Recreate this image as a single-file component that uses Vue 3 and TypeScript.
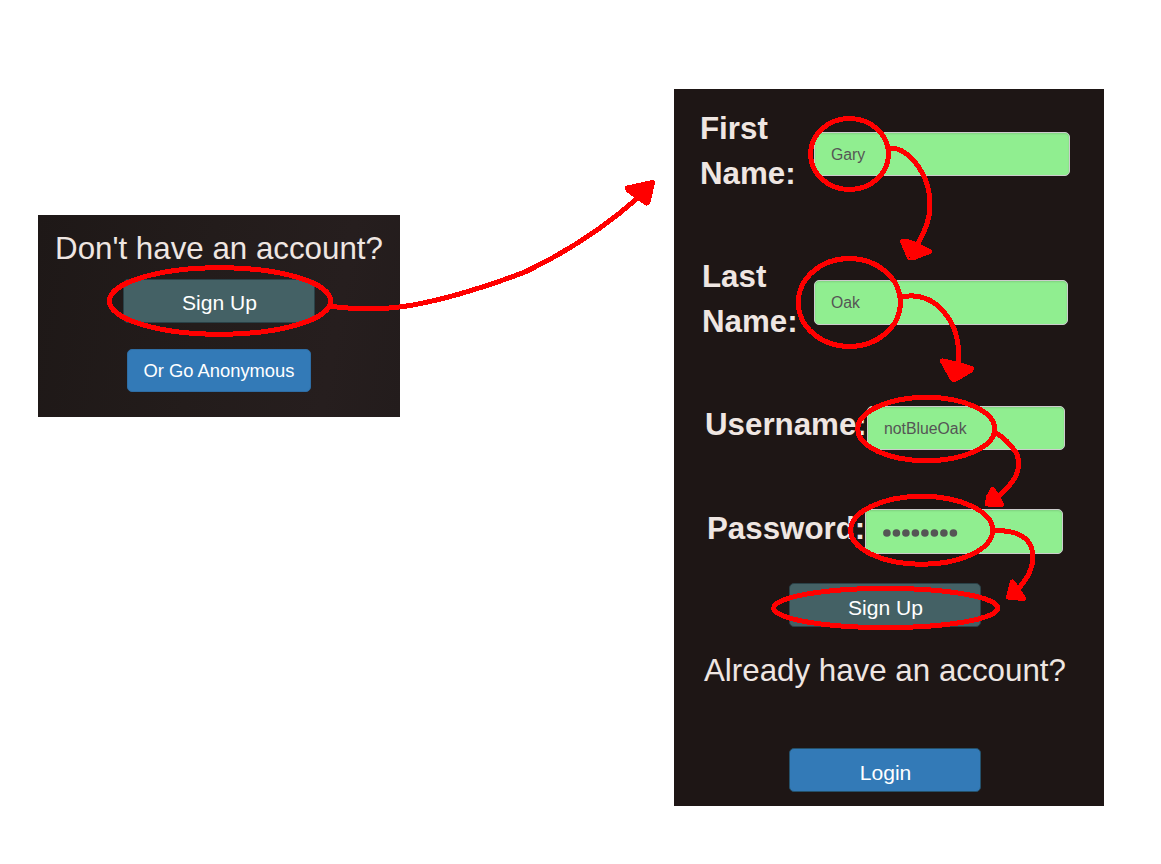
<script setup lang="ts">
interface Field {
  id: string
  lines: string[]
  value: string
  secret?: boolean
}

interface Ring {
  cx: number
  cy: number
  rx: number
  ry: number
}

interface Arrow {
  line: string
  head: string
}

const fields: Field[] = [
  { id: 'first', lines: ['First', 'Name:'], value: 'Gary' },
  { id: 'last', lines: ['Last', 'Name:'], value: 'Oak' },
  { id: 'user', lines: ['Username:'], value: 'notBlueOak' },
  { id: 'pass', lines: ['Password:'], value: '', secret: true },
]

const rings: Ring[] = [
  { cx: 220, cy: 301, rx: 110.5, ry: 33.3 },
  { cx: 849.5, cy: 154, rx: 39, ry: 35.5 },
  { cx: 849.3, cy: 302.5, rx: 51, ry: 44 },
  { cx: 926.3, cy: 429, rx: 68.5, ry: 31.7 },
  { cx: 921.7, cy: 530.3, rx: 71, ry: 34 },
  { cx: 885.7, cy: 608, rx: 112, ry: 19.6 },
]

const arrows: Arrow[] = [
  {
    line: 'M331 306.5C352 309 380 311 413 305C451 298 488 286 525 272C567 252 604 228 640 196',
    head: 'M652.5 182.5L627.5 188L628 190L638 197L646.5 203L648 202Z',
  },
  {
    line: 'M889 149C896 147 903 150 911 158C924 171 930 187 930 205C930 220 925 232 917 245',
    head: 'M902.5 241.5L907 241.5L917 245L929.5 251.5L914 257.5L909.5 257.5Z',
  },
  {
    line: 'M902 297C914 294 929 297 939 307C954 321 960 338 958.7 365',
    head: 'M942.5 361L957 364L971.5 368.5L971 370L955 379.5L952.5 379Z',
  },
  {
    line: 'M995 433C1002 435 1012 446 1017 454C1022 470 1016 481 997 498',
    head: 'M992.5 489.5L988.5 497L987.5 504L1001.5 504.5L998 497Z',
  },
  {
    line: 'M993 530C1008 531 1018 532 1026 539C1038 552 1034 573 1017 590',
    head: 'M1012.5 582L1008.5 597L1023.5 598.5L1018 590Z',
  },
]
</script>

<template>
  <main class="board">
    <section class="card prompt">
      <p class="question">Don't have an account?</p>
      <button class="btn teal" type="button">Sign Up</button>
      <button class="btn anonymous" type="button">Or Go Anonymous</button>
    </section>

    <form class="card signup" @submit.prevent>
      <div v-for="f in fields" :key="f.id" class="field" :class="f.id">
        <div class="label">
          <span v-for="l in f.lines" :key="l">{{ l }}</span>
        </div>
        <div class="input">
          <svg v-if="f.secret" class="dots" width="78" height="8" viewBox="0 0 78 8">
            <circle v-for="n in 8" :key="n" :cx="4.9 + (n - 1) * 9.5" cy="4" r="3.8" />
          </svg>
          <span v-else>{{ f.value }}</span>
        </div>
      </div>
      <button class="btn teal submit" type="button">Sign Up</button>
      <p class="question already">Already have an account?</p>
      <button class="btn login" type="button">Login</button>
    </form>

    <svg class="ink" width="1161" height="864" viewBox="0 0 1161 864" aria-hidden="true">
      <ellipse v-for="(r, i) in rings" :key="i" :cx="r.cx" :cy="r.cy" :rx="r.rx" :ry="r.ry" />
      <g v-for="(a, i) in arrows" :key="'a' + i">
        <path :d="a.line" />
        <path class="head" :d="a.head" />
      </g>
    </svg>
  </main>
</template>

<style>
body {
  margin: 0;
  background: #fff;
}
</style>

<style scoped>
.board {
  position: relative;
  display: flex;
  align-items: flex-start;
  justify-content: space-between;
  box-sizing: border-box;
  width: 1161px;
  height: 864px;
  padding: 89px 57px 0 38px;
  overflow: hidden;
  font-family: "Liberation Sans", Arial, sans-serif;
  color: #efe6e2;
}

.card {
  display: flex;
  flex-direction: column;
  box-sizing: border-box;
  background: #1e1615;
}

.prompt {
  width: 362px;
  height: 202px;
  margin-top: 126px;
  padding-top: 11px;
  align-items: center;
  background: linear-gradient(100deg, #1e1817 0%, #231c1b 45%, #261e1e 80%, #231c1c 100%);
}

.question {
  margin: 0;
  font-size: 31.3px;
  line-height: 45px;
  white-space: nowrap;
}

.btn {
  display: flex;
  align-items: center;
  justify-content: center;
  box-sizing: border-box;
  flex: none;
  width: 192px;
  height: 44px;
  padding: 6px 0 0 1px;
  border: 1px solid #245069;
  border-radius: 5px;
  background: #337ab7;
  color: #fff;
  font-family: inherit;
  font-size: 21.1px;
  line-height: 24px;
}

.teal {
  border-color: #2a4147;
  background: #446165;
}

.prompt .teal {
  margin-top: 8px;
  padding-top: 4px;
}

.anonymous {
  width: 184px;
  height: 43px;
  margin-top: 26px;
  padding: 1px 0 0;
  border-color: #2e6da4;
  font-size: 18.35px;
}

.signup {
  width: 430px;
  height: 717px;
  padding-top: 17px;
}

.field {
  display: flex;
  align-items: flex-start;
  flex: none;
}

.label {
  display: flex;
  flex-direction: column;
  flex: none;
  font-size: 31.3px;
  font-weight: 700;
  line-height: 45px;
  white-space: nowrap;
}

.input {
  display: flex;
  align-items: center;
  box-sizing: border-box;
  flex: none;
  height: 44px;
  padding: 2px 0 0 16px;
  border: 1px solid #ccc;
  border-radius: 5px;
  background: #90ee90;
  box-shadow: inset 0 1px 2px rgba(0, 0, 0, 0.12);
  color: #555;
  font-size: 15.8px;
}

.first {
  height: 90px;
  margin-left: 26px;
}

.first .label {
  width: 114px;
}

.first .input {
  width: 256px;
  margin-top: 26px;
}

.last {
  height: 90px;
  margin: 58px 0 0 28px;
}

.last .label {
  width: 112px;
}

.last .input {
  width: 254px;
  height: 45px;
  margin-top: 26px;
  padding-top: 0;
}

.user {
  height: 48px;
  margin: 58px 0 0 31px;
}

.user .label {
  width: 162px;
}

.user .input {
  width: 198px;
  margin-top: 4px;
}

.pass {
  height: 48px;
  margin: 56px 0 0 33px;
}

.pass .label {
  width: 158px;
}

.pass .input {
  width: 198px;
  height: 45px;
  margin-top: 3px;
}

.dots {
  display: block;
  fill: #555;
}

.submit {
  margin: 29px 0 0 115px;
}

.already {
  margin: 21px 0 0 30px;
}

.login {
  margin: 55px 0 0 115px;
}

.ink {
  position: absolute;
  inset: 0;
  fill: none;
  stroke: #f00;
  stroke-width: 5;
  stroke-linecap: round;
  stroke-linejoin: round;
  shape-rendering: crispEdges;
  pointer-events: none;
}

.head {
  fill: #f00;
}
</style>
